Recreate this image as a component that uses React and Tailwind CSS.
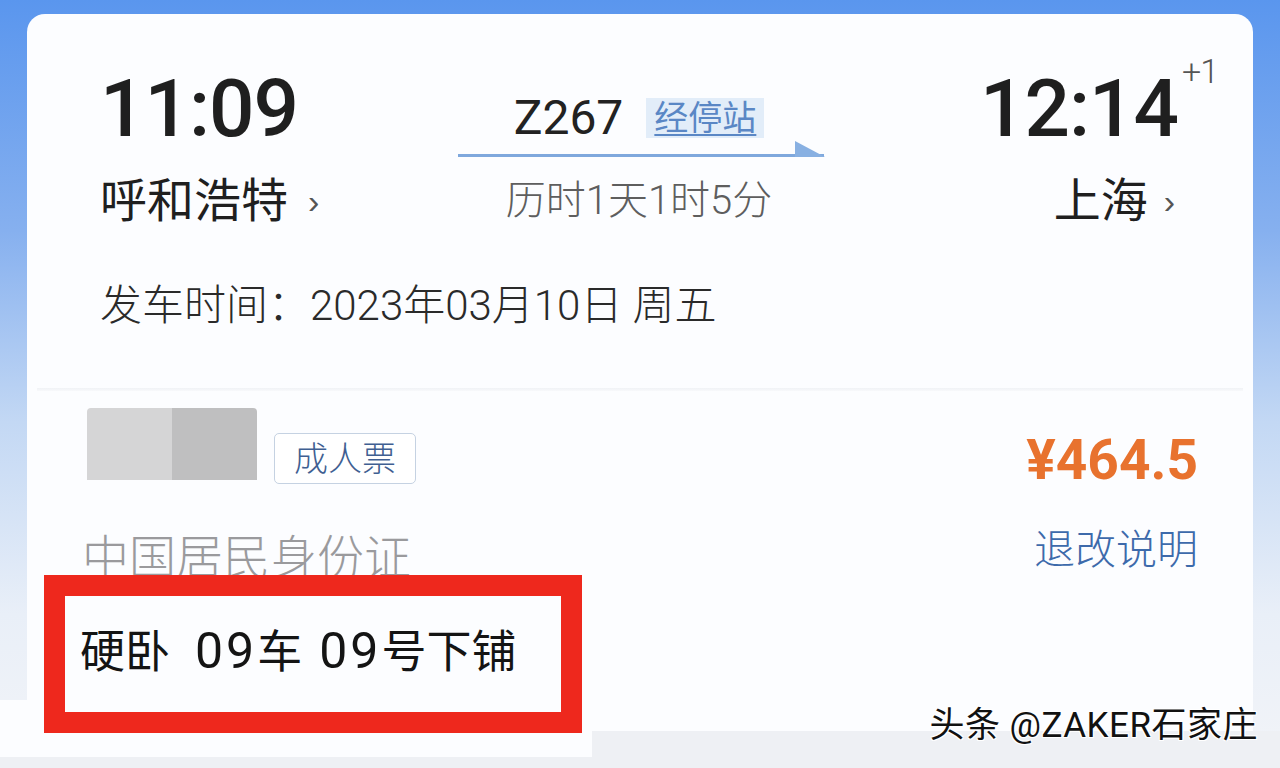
import React from "react";

export default function App() {
  return (
    <div className="relative w-[1280px] h-[768px] overflow-hidden flex flex-col bg-[linear-gradient(180deg,#5a96ee_0%,#86b0ef_30%,#c3d8f4_55%,#e9eff8_80%,#f2f4f8_100%)] font-['Roboto','Noto_Sans_CJK_SC',sans-serif]">
      <div className="h-[14px] shrink-0" />
      <div className="mx-[27px] h-[717px] shrink-0 rounded-t-[18px] bg-[#fcfdff] flex flex-col">
        {/* Top section */}
        <div className="h-[374px] shrink-0 pl-[73px] pr-[75px] pt-[55px] flex flex-col">
          <div className="grid grid-cols-[1fr_auto_1fr]">
            {/* Left */}
            <div className="flex flex-col items-start">
              <div className="text-[80px] leading-none font-medium text-[#1f1f1f] tracking-[-1px]">11:09</div>
              <div className="mt-[28px] flex items-center">
                <span className="text-[47px] leading-none text-[#1f1f1f]">呼和浩特</span>
                <span className="ml-[20px] text-[34px] leading-none text-[#555] font-['Liberation_Sans'] font-light">›</span>
              </div>
            </div>
            {/* Center */}
            <div className="flex flex-col items-center pt-[25px]">
              <div className="h-[48px] flex items-center">
                <span className="text-[48px] leading-none text-[#222]">Z267</span>
                <span className="ml-[23px] h-[40px] px-[8px] flex items-center bg-[#e2edf9] text-[34px] leading-none text-[#5a87c5] underline underline-offset-[4px] decoration-[1.5px]">经停站</span>
              </div>
              <svg width="368" height="20" viewBox="0 0 368 20" className="mt-[-3px] ml-[6px]">
                <rect x="0" y="15" width="366" height="3" fill="#7fa8dd" />
                <polygon points="337,2 367,18 337,18" fill="#88b0e2" />
              </svg>
              <div className="mt-[22px] text-[40px] leading-none font-light text-[#5e5e5e]">历时1天1时5分</div>
            </div>
            {/* Right */}
            <div className="flex flex-col items-end">
              <div className="relative text-[80px] leading-none font-medium text-[#1f1f1f] tracking-[-1px]">
                12:14
                <span className="absolute left-[calc(100%+4px)] top-[-15px] text-[34px] leading-none font-light text-[#555]">+1</span>
              </div>
              <div className="mt-[28px] pr-[3px] flex items-center">
                <span className="text-[47px] leading-none text-[#1f1f1f]">上海</span>
                <span className="ml-[16px] text-[34px] leading-none text-[#555] font-['Liberation_Sans']">›</span>
              </div>
            </div>
          </div>
          <div className="mt-[61px] text-[42px] leading-none font-light text-[#2a2a2a]">发车时间：2023年03月10日 周五</div>
        </div>
        {/* Separator */}
        <div className="h-[3px] mx-[10px] bg-[linear-gradient(180deg,#f0f2f6,#f8f9fb)]" />
        {/* Bottom section */}
        <div className="pl-[60px] pr-[55px] pt-[17px] flex flex-col">
          <div className="flex items-start justify-between">
            <div className="flex items-start">
              <div className="flex h-[72px] rounded-t-[4px] overflow-hidden">
                <div className="w-[85px] bg-[#d5d5d6]" />
                <div className="w-[85px] bg-[#bfbfc0]" />
              </div>
              <div className="ml-[17px] mt-[25px] h-[51px] w-[142px] flex items-center justify-center rounded-[5px] border-[1.5px] border-[#c5d2e2] bg-white text-[34px] leading-none font-light text-[#3f5f92]">成人票</div>
            </div>
            <div className="mt-[25px] text-[55px] leading-none font-bold text-[#e8722e]">¥464.5</div>
          </div>
          <div className="mt-[42px] flex items-start justify-between">
            <div className="ml-[-5px] mt-[4px] text-[47px] leading-none font-light text-[#9a9a9d]">中国居民身份证</div>
            <div className="text-[41px] leading-none font-light text-[#3d6aab]">退改说明</div>
          </div>
        </div>
      </div>
      <div className="flex-1 bg-[#eef0f4]" />

      {/* white patch behind annotation */}
      <div className="absolute left-0 top-[700px] w-[592px] h-[57px] bg-[#fcfdff]" />
      {/* red annotation box */}
      <div className="absolute left-[44px] top-[575px] w-[538px] h-[158px] border-[21px] border-[#ee281d] bg-[#fcfdff] flex items-center pl-[15px] pb-[6px] text-[#141414]">
        <div className="flex items-baseline leading-none">
          <span className="text-[45px]">硬卧</span>
          <span className="ml-[25px] text-[50px] tracking-[3px]">09</span>
          <span className="text-[45px]">车</span>
          <span className="ml-[17px] text-[50px] tracking-[3px]">09</span>
          <span className="text-[45px]">号下铺</span>
        </div>
      </div>
      {/* watermark */}
      <div className="absolute right-[22px] top-[708px] text-[35px] leading-none text-[#111] tracking-[0.5px] [text-shadow:0_0_2px_#fff,1px_1px_0_#fff,-1px_-1px_0_#fff,1px_-1px_0_#fff,-1px_1px_0_#fff] whitespace-pre">头条 @ZAKER石家庄</div>
    </div>
  );
}
